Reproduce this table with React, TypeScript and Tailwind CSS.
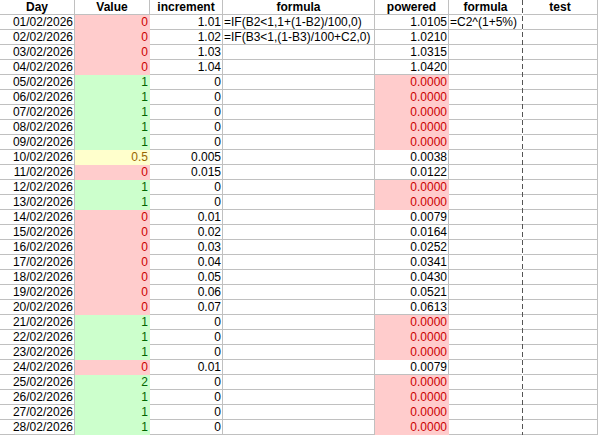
import React from "react";

type Tone = "bad" | "good" | "neutral" | undefined;

type Row = {
  day: string;
  value: string;
  vt: Tone;
  inc: string;
  f1?: string;
  pw: string;
  pt?: Tone;
  f2?: string;
};

const rows: Row[] = [
  { day: "01/02/2026", value: "0", vt: "bad", inc: "1.01", f1: "=IF(B2<1,1+(1-B2)/100,0)", pw: "1.0105", f2: "=C2^(1+5%)" },
  { day: "02/02/2026", value: "0", vt: "bad", inc: "1.02", f1: "=IF(B3<1,(1-B3)/100+C2,0)", pw: "1.0210" },
  { day: "03/02/2026", value: "0", vt: "bad", inc: "1.03", pw: "1.0315" },
  { day: "04/02/2026", value: "0", vt: "bad", inc: "1.04", pw: "1.0420" },
  { day: "05/02/2026", value: "1", vt: "good", inc: "0", pw: "0.0000", pt: "bad" },
  { day: "06/02/2026", value: "1", vt: "good", inc: "0", pw: "0.0000", pt: "bad" },
  { day: "07/02/2026", value: "1", vt: "good", inc: "0", pw: "0.0000", pt: "bad" },
  { day: "08/02/2026", value: "1", vt: "good", inc: "0", pw: "0.0000", pt: "bad" },
  { day: "09/02/2026", value: "1", vt: "good", inc: "0", pw: "0.0000", pt: "bad" },
  { day: "10/02/2026", value: "0.5", vt: "neutral", inc: "0.005", pw: "0.0038" },
  { day: "11/02/2026", value: "0", vt: "bad", inc: "0.015", pw: "0.0122" },
  { day: "12/02/2026", value: "1", vt: "good", inc: "0", pw: "0.0000", pt: "bad" },
  { day: "13/02/2026", value: "1", vt: "good", inc: "0", pw: "0.0000", pt: "bad" },
  { day: "14/02/2026", value: "0", vt: "bad", inc: "0.01", pw: "0.0079" },
  { day: "15/02/2026", value: "0", vt: "bad", inc: "0.02", pw: "0.0164" },
  { day: "16/02/2026", value: "0", vt: "bad", inc: "0.03", pw: "0.0252" },
  { day: "17/02/2026", value: "0", vt: "bad", inc: "0.04", pw: "0.0341" },
  { day: "18/02/2026", value: "0", vt: "bad", inc: "0.05", pw: "0.0430" },
  { day: "19/02/2026", value: "0", vt: "bad", inc: "0.06", pw: "0.0521" },
  { day: "20/02/2026", value: "0", vt: "bad", inc: "0.07", pw: "0.0613" },
  { day: "21/02/2026", value: "1", vt: "good", inc: "0", pw: "0.0000", pt: "bad" },
  { day: "22/02/2026", value: "1", vt: "good", inc: "0", pw: "0.0000", pt: "bad" },
  { day: "23/02/2026", value: "1", vt: "good", inc: "0", pw: "0.0000", pt: "bad" },
  { day: "24/02/2026", value: "0", vt: "bad", inc: "0.01", pw: "0.0079" },
  { day: "25/02/2026", value: "2", vt: "good", inc: "0", pw: "0.0000", pt: "bad" },
  { day: "26/02/2026", value: "1", vt: "good", inc: "0", pw: "0.0000", pt: "bad" },
  { day: "27/02/2026", value: "1", vt: "good", inc: "0", pw: "0.0000", pt: "bad" },
  { day: "28/02/2026", value: "1", vt: "good", inc: "0", pw: "0.0000", pt: "bad" },
];

const base =
  "h-[15px] border-b border-r leading-[14px] whitespace-nowrap overflow-visible";

function toneClass(t: Tone) {
  if (t === "bad") return "bg-[#ffcccc] text-[#cc0000] border-transparent";
  if (t === "good") return "bg-[#ccffcc] text-[#006600] border-transparent";
  if (t === "neutral") return "bg-[#ffffcc] text-[#996600] border-transparent";
  return "bg-white text-black border-[#c0c0c0]";
}

function Cell({
  children,
  tone,
  align = "right",
  bold = false,
}: {
  children?: React.ReactNode;
  tone?: Tone;
  align?: "right" | "left" | "center";
  bold?: boolean;
}) {
  const a =
    align === "right"
      ? "text-right pr-px"
      : align === "left"
      ? "text-left pl-px"
      : "text-center";
  return (
    <div className={`${base} ${toneClass(tone)} ${a} ${bold ? "font-bold" : ""}`}>
      {children}
    </div>
  );
}

export default function App() {
  const headers = ["Day", "Value", "increment", "formula", "powered", "formula", "test"];
  return (
    <div
      className="relative w-[598px] h-[435px] overflow-hidden bg-white text-[12px]"
      style={{ fontFamily: '"Liberation Sans", Arial, sans-serif' }}
    >
      <div className="grid grid-cols-[75px_75px_73px_152px_74px_74px_75px]">
        {headers.map((h, i) => (
          <Cell key={i} align="center" bold>
            {h}
          </Cell>
        ))}
        {rows.map((r, i) => (
          <React.Fragment key={i}>
            <Cell>{r.day}</Cell>
            <Cell tone={r.vt}>{r.value}</Cell>
            <Cell>{r.inc}</Cell>
            <Cell align="left">{r.f1 ?? ""}</Cell>
            <Cell tone={r.pt}>{r.pw}</Cell>
            <Cell align="left">{r.f2 ?? ""}</Cell>
            <Cell />
          </React.Fragment>
        ))}
      </div>
      <div className="absolute top-0 left-[522px] w-px h-full bg-[repeating-linear-gradient(to_bottom,#555555_0px,#555555_5px,#ffffff_5px,#ffffff_8px)]" />
    </div>
  );
}
